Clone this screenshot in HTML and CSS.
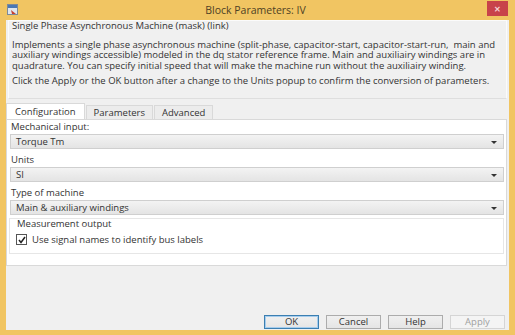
FILE: index.html
```html
<!DOCTYPE html>
<html lang="en">
<head>
    <meta charset="UTF-8">
    <title>Block Parameters: IV</title>
    <link rel="stylesheet" href="styles.css">
</head>
<body>
    <div class="window">
        <div class="titlebar">
            <svg class="app-icon" width="11" height="11" viewBox="0 0 11 11">
                <rect x="0.5" y="0.5" width="10" height="10" fill="#dfe6ee" stroke="#7d8a99"/>
                <rect x="1" y="1" width="9" height="3" fill="#4a78b5"/>
                <path d="M4 6 L9 10 L5 10 Z" fill="#c8402f"/>
            </svg>
            <div class="title">Block Parameters: IV</div>
            <div class="close">&#x2715;</div>
        </div>
        <div class="client">
            <div class="desc">
                <div class="desc-title">Single Phase Asynchronous Machine (mask) (link)</div>
                <p>Implements a single phase asynchronous machine (split-phase, capacitor-start, capacitor-start-run,&nbsp; main and<br>auxiliary windings accessible) modeled in the dq stator reference frame. Main and auxiliairy windings are in<br>quadrature. You can specify initial speed that will make the machine run without the auxiliairy winding.</p>
                <p>Click the Apply or the OK button after a change to the Units popup to confirm the conversion of parameters.</p>
            </div>
            <div class="tabs">
                <div class="tab active">Configuration</div>
                <div class="tab">Parameters</div>
                <div class="tab">Advanced</div>
            </div>
            <div class="panel">
                <label class="field-label">Mechanical input:</label>
                <div class="select">Torque Tm<span class="arrow"></span></div>
                <label class="field-label">Units</label>
                <div class="select">SI<span class="arrow"></span></div>
                <label class="field-label">Type of machine</label>
                <div class="select">Main &amp; auxiliary windings<span class="arrow"></span></div>
                <div class="group">
                    <div class="group-title">Measurement output</div>
                    <div class="check-row">
                        <span class="checkbox">
                            <svg width="8" height="8" viewBox="0 0 8 8"><path d="M1 4 L3 6.5 L7 1" fill="none" stroke="#222" stroke-width="1.5"/></svg>
                        </span>
                        Use signal names to identify bus labels
                    </div>
                </div>
            </div>
            <div class="buttons">
                <div class="btn default">OK</div>
                <div class="btn">Cancel</div>
                <div class="btn">Help</div>
                <div class="btn disabled">Apply</div>
            </div>
        </div>
    </div>
</body>
</html>
```
FILE: styles.css
```css
body {
    margin: 0;
    font-family: "Open Sans", "Liberation Sans", sans-serif;
    font-size: 9.5px;
    color: #333;
}
.window {
    width: 515px;
    height: 335px;
    background-color: #f1c562;
    display: flex;
    flex-direction: column;
}
.titlebar {
    height: 20px;
    display: flex;
    align-items: center;
    padding: 0 7px;
}
.app-icon {
    flex: none;
    margin-top: -1px;
}
.title {
    flex: 1;
    text-align: center;
    font-size: 10.5px;
    color: #4e4124;
    padding-left: 6px;
}
.close {
    width: 21px;
    height: 15px;
    margin-top: -4px;
    background-color: #c8434a;
    color: #f4d0d2;
    font-size: 8px;
    font-weight: bold;
    display: flex;
    align-items: center;
    justify-content: center;
}
.client {
    flex: 1;
    margin: 0 6px 5px 6px;
    background-color: #f0f0f0;
    display: flex;
    flex-direction: column;
}
.desc {
    margin: 0 2px;
    padding: 0 3px;
    border: 1px solid #fbfbfb;
    border-bottom-color: #dedede;
    height: 77px;
    line-height: 10.5px;
}
.desc-title {
    margin: 0 0 8px 0;
}
.desc p {
    margin: 0 0 5px 0;
    white-space: nowrap;
}
.tabs {
    display: flex;
    margin-top: 5px;
    height: 15px;
    align-items: flex-end;
}
.tab {
    padding: 0 7px;
    height: 13px;
    line-height: 13px;
    border: 1px solid #d9d9d9;
    border-bottom: none;
    background-color: #ececec;
    margin-right: 1px;
}
.tab.active {
    height: 15px;
    line-height: 15px;
    background-color: #fff;
    padding: 0 8px;
}
.panel {
    background-color: #fff;
    border: 1px solid #d9d9d9;
    margin-right: 2px;
    padding: 0 2px 0 3px;
    height: 145px;
}
.field-label {
    display: block;
    height: 10px;
    line-height: 10px;
    margin: 2px 0 2px 1px;
}
.select {
    position: relative;
    height: 13px;
    line-height: 13px;
    border: 1px solid #cfcfcf;
    background: linear-gradient(#f3f3f3, #e4e4e4);
    padding-left: 5px;
    margin-bottom: 6px;
}
.arrow {
    position: absolute;
    right: 6px;
    top: 6px;
    border-left: 3px solid transparent;
    border-right: 3px solid transparent;
    border-top: 3px solid #333;
}
.group {
    border: 1px solid #e6e6e6;
    margin: -3px 0 0 -1px;
    padding: 0 6px 6px 6px;
    height: 28px;
}
.group-title {
    line-height: 12px;
    margin: -1px 0 4px 1px;
}
.check-row {
    display: flex;
    align-items: center;
    gap: 5px;
    line-height: 11px;
}
.checkbox {
    width: 9px;
    height: 9px;
    border: 1px solid #555;
    background-color: #fff;
    display: flex;
    align-items: center;
    justify-content: center;
}
.buttons {
    margin-top: auto;
    display: flex;
    justify-content: flex-end;
    gap: 7px;
    padding: 0 4px 1px 0;
}
.btn {
    width: 53px;
    height: 12px;
    line-height: 12px;
    text-align: center;
    border: 1px solid #acacac;
    background: linear-gradient(#f0f0f0, #e5e5e5);
}
.btn.default {
    border-color: #3c7fb1;
    box-shadow: inset 0 0 0 1px #a6cdee;
}
.btn.disabled {
    color: #a0a0a0;
    border-color: #d5d5d5;
    background: #f4f4f4;
}
```
